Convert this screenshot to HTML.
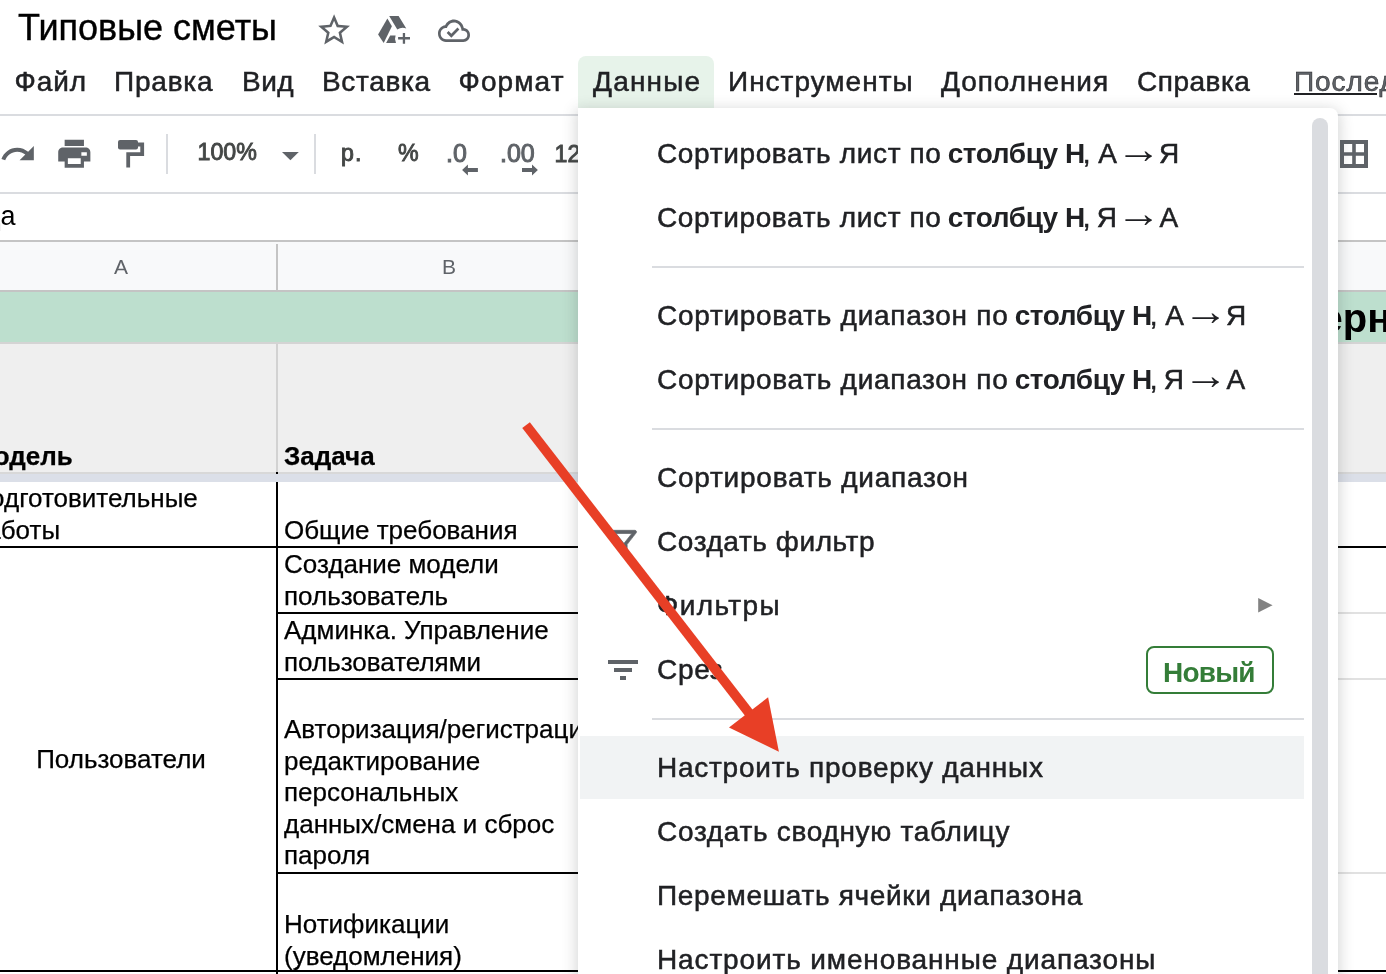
<!DOCTYPE html>
<html lang="ru"><head><meta charset="utf-8"><title>Типовые сметы</title>
<style>
html,body{margin:0;padding:0}
body{width:1386px;height:974px;overflow:hidden;background:#fff;position:relative;font-family:"Liberation Sans",sans-serif;color:#000}
#app{position:absolute;left:0;top:0;width:1386px;height:974px;overflow:hidden;will-change:transform}
.a{position:absolute;white-space:nowrap}
.hl{position:absolute;left:0;height:2px}
#title{left:18px;top:7px;font-size:36px;line-height:41px;color:#000;-webkit-text-stroke:0.400px #000}
.mi{top:66px;font-size:28px;line-height:32px;color:#202124;-webkit-text-stroke:0.500px #202124}
.tb{font-size:23.200px;line-height:28px;color:#444746;-webkit-text-stroke:0.900px #444746}
.cell{font-size:26px;line-height:31.600px;color:#000;-webkit-text-stroke:0.250px #000}
.di{left:657px;font-size:28px;line-height:32px;color:#202124;-webkit-text-stroke:0.500px #202124}
.di b{font-weight:bold}
.ar{display:inline-block;transform-origin:50% 50%}
.sep{position:absolute;left:652px;width:652px;height:2px;background:#dadce0}
</style></head><body><div id="app">
<div id="title" class="a" style="">Типовые сметы</div>
<div id="datatab" class="a" style="left:578px;top:56px;width:136px;height:53px;background:#e7f3ea;border-radius:8px 8px 0 0"></div>
<div id="m0" class="a mi" style="left:14.5px;letter-spacing:0.9px;">Файл</div>
<div id="m1" class="a mi" style="left:114px;letter-spacing:0.8px;">Правка</div>
<div id="m2" class="a mi" style="left:242px;letter-spacing:0.5px;">Вид</div>
<div id="m3" class="a mi" style="left:322px;letter-spacing:0.67px;">Вставка</div>
<div id="m4" class="a mi" style="left:458.5px;letter-spacing:1.1px;">Формат</div>
<div id="m5" class="a mi" style="left:593px;letter-spacing:1.2px;">Данные</div>
<div id="m6" class="a mi" style="left:728px;letter-spacing:1.0px;">Инструменты</div>
<div id="m7" class="a mi" style="left:941px;letter-spacing:0.94px;">Дополнения</div>
<div id="m8" class="a mi" style="left:1137px;letter-spacing:0.5px;">Справка</div>
<div id="m9" class="a mi" style="left:1294px;color:#5f6368;text-decoration:underline;letter-spacing:0.9px;">Последнее изменение</div>
<div class="hl" style="top:114px;width:1386px;background:#dadce0"></div>
<svg class="a" style="left:314.8px;top:11.2px" width="38.2" height="38.2" viewBox="0 0 24 24"><path fill="#5f6368" d="M22 9.240l-7.190-.620L12 2 9.190 8.630 2 9.240l5.460 4.730L5.820 21 12 17.270 18.180 21l-1.630-7.030L22 9.240zM12 15.400l-3.760 2.270 1-4.280-3.320-2.880 4.380-.380L12 6.100l1.710 4.040 4.380.380-3.320 2.880 1 4.280L12 15.400z"/></svg>
<svg class="a" style="left:376px;top:14px" width="36" height="32" viewBox="376 14 36 32"><g fill="#5f6368"><path d="M387.400 18.500 L391.900 26.300 L383.700 43 L378.100 34.600 Z"/><path d="M389.200 15.900 L398.600 15.900 L406.300 28.600 A9.500 9.500 0 0 0 397.300 29.600 Z"/><path d="M390.200 35.400 L395.600 35.400 A9.500 9.500 0 0 0 396 43 L386.100 43 Z"/><path d="M402.800 32.900h2.300v4.200h4.900v2.300h-4.900v4.300h-2.300v-4.300h-4.700v-2.300h4.700z"/></g></svg>
<svg class="a" style="left:438px;top:13.900px" width="32" height="33.600" viewBox="0 0 24 24" preserveAspectRatio="none"><path fill="#5f6368" d="M19.350 10.040C18.670 6.590 15.640 4 12 4 9.110 4 6.600 5.640 5.350 8.040 2.340 8.360 0 10.910 0 14c0 3.310 2.690 6 6 6h13c2.760 0 5-2.240 5-5 0-2.640-2.050-4.780-4.650-4.960zM19 18H6c-2.210 0-4-1.790-4-4 0-2.050 1.530-3.760 3.560-3.970l1.070-.110.500-.950C8.080 7.140 9.940 6 12 6c2.620 0 4.880 1.860 5.390 4.430l.300 1.500 1.530.110c1.560.100 2.780 1.410 2.780 2.960 0 1.650-1.350 3-3 3zm-9-3.820l-2.090-2.090L6.500 13.500 10 17l6.010-6.010-1.410-1.410z"/></svg>
<svg class="a" style="left:-0.700px;top:135.300px" width="38" height="38" viewBox="0 0 24 24"><path fill="#5f6368" d="M18.400 10.600C16.550 8.990 14.150 8 11.500 8c-4.650 0-8.580 3.030-9.960 7.220L3.900 16c1.050-3.190 4.050-5.500 7.600-5.500 1.950 0 3.730.720 5.120 1.880L13 16h9V7l-3.600 3.600z"/></svg>
<svg class="a" style="left:54.800px;top:135.200px" width="38.600" height="37.400" viewBox="0 0 24 24" preserveAspectRatio="none"><path fill="#5f6368" d="M19 8H5c-1.660 0-3 1.340-3 3v6h4v4h12v-4h4v-6c0-1.660-1.340-3-3-3zM8 15h8v3.600H8zM16.400 11h3.400v2.300h-3.400zM18 3H6v4h12V3z"/></svg>
<svg class="a" style="left:116px;top:138px" width="30" height="32" viewBox="116 138 30 32"><rect x="118" y="140" width="20" height="9.500" rx="2" fill="#5f6368"/><path d="M137 144.500 H142.200 V154.200 H128.200 V167.600" fill="none" stroke="#5f6368" stroke-width="3.800"/></svg>
<div class="a" style="left:166px;top:134px;width:2px;height:40px;background:#dadce0"></div>
<div id="t100" class="a tb" style="left:197.500px;top:138px">100%</div>
<svg class="a" style="left:282px;top:152px" width="17" height="9" viewBox="0 0 17 9"><path d="M0 0h16.800L8.400 8.200z" fill="#5f6368"/></svg>
<div class="a" style="left:314px;top:134px;width:2px;height:40px;background:#dadce0"></div>
<div id="tr" class="a tb" style="left:341px;letter-spacing:1px;top:138.500px">р.</div>
<div id="tp" class="a tb" style="left:398px;top:138.500px">%</div>
<div id="t0" class="a tb" style="left:446px;top:138px;font-size:25px;line-height:30px;color:#5f6368;-webkit-text-stroke:1px #5f6368;letter-spacing:0px">.0</div>
<div id="t00" class="a tb" style="left:500px;top:138px;font-size:25px;line-height:30px;color:#5f6368;-webkit-text-stroke:1px #5f6368;letter-spacing:0px">.00</div>
<div id="t12" class="a tb" style="left:554.500px;top:139.500px">123</div>
<svg class="a" style="left:460px;top:163px" width="80" height="14" viewBox="460 163 80 14"><g fill="#5f6368"><path d="M462.100 170 L467.900 164.500 V168 H477.900 V172 H467.900 V175.500 Z"/><path d="M537.900 170 L532 164.500 V168 H522 V172 H532 V175.500 Z"/></g></svg>
<svg class="a" style="left:1340px;top:140px" width="28" height="28" viewBox="0 0 28 28"><path fill="#5f6368" fill-rule="evenodd" d="M0 0h28v28H0zM4 4v8.200h8.200V4zM15.800 4v8.200H24V4zM4 15.800V24h8.200v-8.200zM15.800 15.800V24H24v-8.200z"/></svg>

<div class="hl" style="top:192px;width:1386px;background:#dadce0"></div>
<div id="fx" class="a" style="left:-15.3px;top:200px;font-size:27px;line-height:32px">да</div>
<div class="hl" style="top:240px;width:1386px;background:#c4c4c4"></div>
<div id="sheet">
<div class="a" style="left:0;top:242px;width:1386px;height:48px;background:#f8f9fa"></div>
<div class="a" style="left:276px;top:244px;width:2px;height:46px;background:#c4c4c4"></div>
<div id="colA" class="a" style="left:0;top:252px;width:242px;text-align:center;font-size:21px;line-height:30px;color:#5f6368">A</div>
<div id="colB" class="a" style="left:278px;top:252px;width:342px;text-align:center;font-size:21px;line-height:30px;color:#5f6368">B</div>
<div class="hl" style="top:290px;width:1386px;background:#c4c4c4"></div>
<div class="a" style="left:0;top:292px;width:1386px;height:50px;background:#bddfce"></div>
<div class="hl" style="top:342px;width:1386px;background:#d4d4d4"></div>
<div id="ern0" class="a" style="right:65.5px;top:295px;font-size:40px;line-height:46px;font-weight:bold">Прим</div>
<div id="ern" class="a" style="left:1320.5px;top:295px;font-size:40px;line-height:46px;font-weight:bold">ерный</div>
<div class="a" style="left:0;top:344px;width:1386px;height:128px;background:#efefef"></div>
<div class="a" style="left:276px;top:344px;width:2px;height:128px;background:#d2d2d2"></div>
<div class="hl" style="top:472px;width:1386px;background:#d8d8d8"></div>
<div class="a" style="left:276px;top:472px;width:2px;height:2px;background:#000"></div>
<div class="a" style="left:0;top:474px;width:1386px;height:8px;background:#dbdfe8"></div>
<div id="c_model" class="a cell" style="left:-28px;top:441px;font-weight:bold">Модель</div>
<div id="c_task" class="a cell" style="left:284px;top:441px;font-weight:bold">Задача</div>
<div class="a" style="left:276px;top:482px;width:2px;height:492px;background:#000"></div>
<div id="c_prep1" class="a cell" style="left:-28.6px;top:483px">Подготовительные</div>
<div id="c_prep2" class="a cell" style="left:-28.2px;top:515px">работы</div>
<div id="c_b1" class="a cell" style="left:284px;top:515px">Общие требования</div>
<div class="hl" style="top:546px;width:1386px;background:#000"></div>
<div id="c_b2" class="a cell" style="left:284px;top:549px">Создание модели<br>пользователь</div>
<div class="hl" style="top:612px;left:276px;width:1062px;background:#000"></div>
<div class="hl" style="top:612px;left:1338px;width:48px;background:#e1e1e1"></div>
<div id="c_b3" class="a cell" style="left:284px;top:615px">Админка. Управление<br>пользователями</div>
<div class="hl" style="top:678px;left:276px;width:1062px;background:#000"></div>
<div class="hl" style="top:678px;left:1338px;width:48px;background:#e1e1e1"></div>
<div id="c_users" class="a cell" style="left:0;top:744px;width:242px;text-align:center">Пользователи</div>
<div id="c_b4" class="a cell" style="left:284px;top:714px">Авторизация/регистрация,<br>редактирование<br>персональных<br>данных/смена и сброс<br>пароля</div>
<div class="hl" style="top:872px;left:276px;width:1062px;background:#000"></div>
<div class="hl" style="top:872px;left:1338px;width:48px;background:#e1e1e1"></div>
<div id="c_b5" class="a cell" style="left:284px;top:909px">Нотификации<br>(уведомления)</div>
<div class="hl" style="top:970px;width:1386px;background:#000"></div>
</div>
<div id="menu">
<div class="a" style="left:578px;top:108px;width:760px;height:900px;background:#fff;border-radius:0 8px 0 0;box-shadow:0 3px 14px 2px rgba(60,64,67,.21)"></div>

<div class="a" style="left:580px;top:736px;width:724px;height:63px;background:#f1f3f4"></div>
<div class="sep" style="top:266px"></div>
<div class="sep" style="top:428px"></div>
<div class="sep" style="top:718px"></div>
<div class="a di" id="d0a" style="top:138px;left:657px;letter-spacing:0.64px;">Сортировать лист по</div>
<div class="a di" id="d0b" style="top:138px;left:947.7px;font-weight:bold;-webkit-text-stroke:0;letter-spacing:-0.4px;">столбцу Н</div>
<div class="a di" id="d0c" style="top:138px;left:1082.7px;">, А</div>
<div class="a di" id="d0ar" style="top:134px;left:1124.8px;transform:scale(1.6,1.45);-webkit-text-stroke:0">→</div>
<div class="a di" id="d0d" style="top:138px;left:1159px">Я</div>
<div class="a di" id="d1a" style="top:202px;left:657px;letter-spacing:0.64px;">Сортировать лист по</div>
<div class="a di" id="d1b" style="top:202px;left:947.7px;font-weight:bold;-webkit-text-stroke:0;letter-spacing:-0.4px;">столбцу Н</div>
<div class="a di" id="d1c" style="top:202px;left:1082.7px;letter-spacing:-0.8px;">, Я</div>
<div class="a di" id="d1ar" style="top:198px;left:1124.8px;transform:scale(1.6,1.45);-webkit-text-stroke:0">→</div>
<div class="a di" id="d1d" style="top:202px;left:1159.5px">А</div>
<div class="a di" id="d2a" style="top:300px;left:657px;letter-spacing:0.71px;">Сортировать диапазон по</div>
<div class="a di" id="d2b" style="top:300px;left:1014.7px;font-weight:bold;-webkit-text-stroke:0;letter-spacing:-0.4px;">столбцу Н</div>
<div class="a di" id="d2c" style="top:300px;left:1149.7px;">, А</div>
<div class="a di" id="d2ar" style="top:296px;left:1191.8px;transform:scale(1.6,1.45);-webkit-text-stroke:0">→</div>
<div class="a di" id="d2d" style="top:300px;left:1226px">Я</div>
<div class="a di" id="d3a" style="top:364px;left:657px;letter-spacing:0.71px;">Сортировать диапазон по</div>
<div class="a di" id="d3b" style="top:364px;left:1014.7px;font-weight:bold;-webkit-text-stroke:0;letter-spacing:-0.4px;">столбцу Н</div>
<div class="a di" id="d3c" style="top:364px;left:1149.7px;letter-spacing:-0.8px;">, Я</div>
<div class="a di" id="d3ar" style="top:360px;left:1191.8px;transform:scale(1.6,1.45);-webkit-text-stroke:0">→</div>
<div class="a di" id="d3d" style="top:364px;left:1226.5px">А</div>
<div class="a di" id="d4" style="top:462px;letter-spacing:0.76px;">Сортировать диапазон</div>
<div class="a di" id="d5" style="top:526px;letter-spacing:0.58px;">Создать фильтр</div>
<div class="a di" id="d6" style="top:590px;letter-spacing:1.4px;">Фильтры</div>
<div class="a di" id="d7" style="top:654px;letter-spacing:0.7px;">Срез</div>
<div class="a di" id="d8" style="top:752px;letter-spacing:0.75px;">Настроить проверку данных</div>
<div class="a di" id="d9" style="top:816px;letter-spacing:0.7px;">Создать сводную таблицу</div>
<div class="a di" id="d10" style="top:880px;letter-spacing:0.67px;">Перемешать ячейки диапазона</div>
<div class="a di" id="d11" style="top:944px;letter-spacing:0.87px;">Настроить именованные диапазоны</div>
<div class="a" style="left:1312px;top:118px;width:16px;height:900px;background:#dadce0;border-radius:8px"></div>
<div class="a" style="left:1146px;top:646px;width:124px;height:44px;border:2px solid #347d38;border-radius:8px"></div>
<div id="badge" class="a" style="left:1163px;top:657px;font-size:28px;line-height:32px;font-weight:bold;color:#347d38;letter-spacing:-0.800px">Новый</div>
<svg class="a" style="left:1257px;top:597px" width="17" height="17" viewBox="0 0 17 17"><path d="M1.200 1 L15.600 8.200 L1.200 15.400 Z" fill="#828282"/></svg>
<svg class="a" style="left:608px;top:660px" width="30" height="20" viewBox="0 0 30 20"><path d="M0 0h30v4H0zM6 8h18v4H6zM12 16h6v4h-6z" fill="#5f6368"/></svg>
<svg class="a" style="left:604.900px;top:523.700px" width="37.920" height="37.920" viewBox="0 0 24 24"><path fill="#5f6368" stroke="#5f6368" stroke-width="0.450" stroke-linejoin="miter" d="M7 6h10l-5.010 6.300L7 6zm-2.750-.390C6.270 8.200 10 13 10 13v6c0 .550.450 1 1 1h2c.550 0 1-.450 1-1v-6s3.720-4.800 5.740-7.390A.998.998 0 0 0 18.950 4H5.040c-.830 0-1.300.950-.790 1.610z"/></svg>
</div>
<svg id="arrow" class="a" style="left:0;top:0" width="1386" height="974" viewBox="0 0 1386 974"><line x1="526.050" y1="425.150" x2="750" y2="714.200" stroke="#e83f26" stroke-width="9.600"/><path d="M778.900 751.800 L729 727.400 L768.100 697.300 Z" fill="#e83f26"/></svg>
</div></body></html>
